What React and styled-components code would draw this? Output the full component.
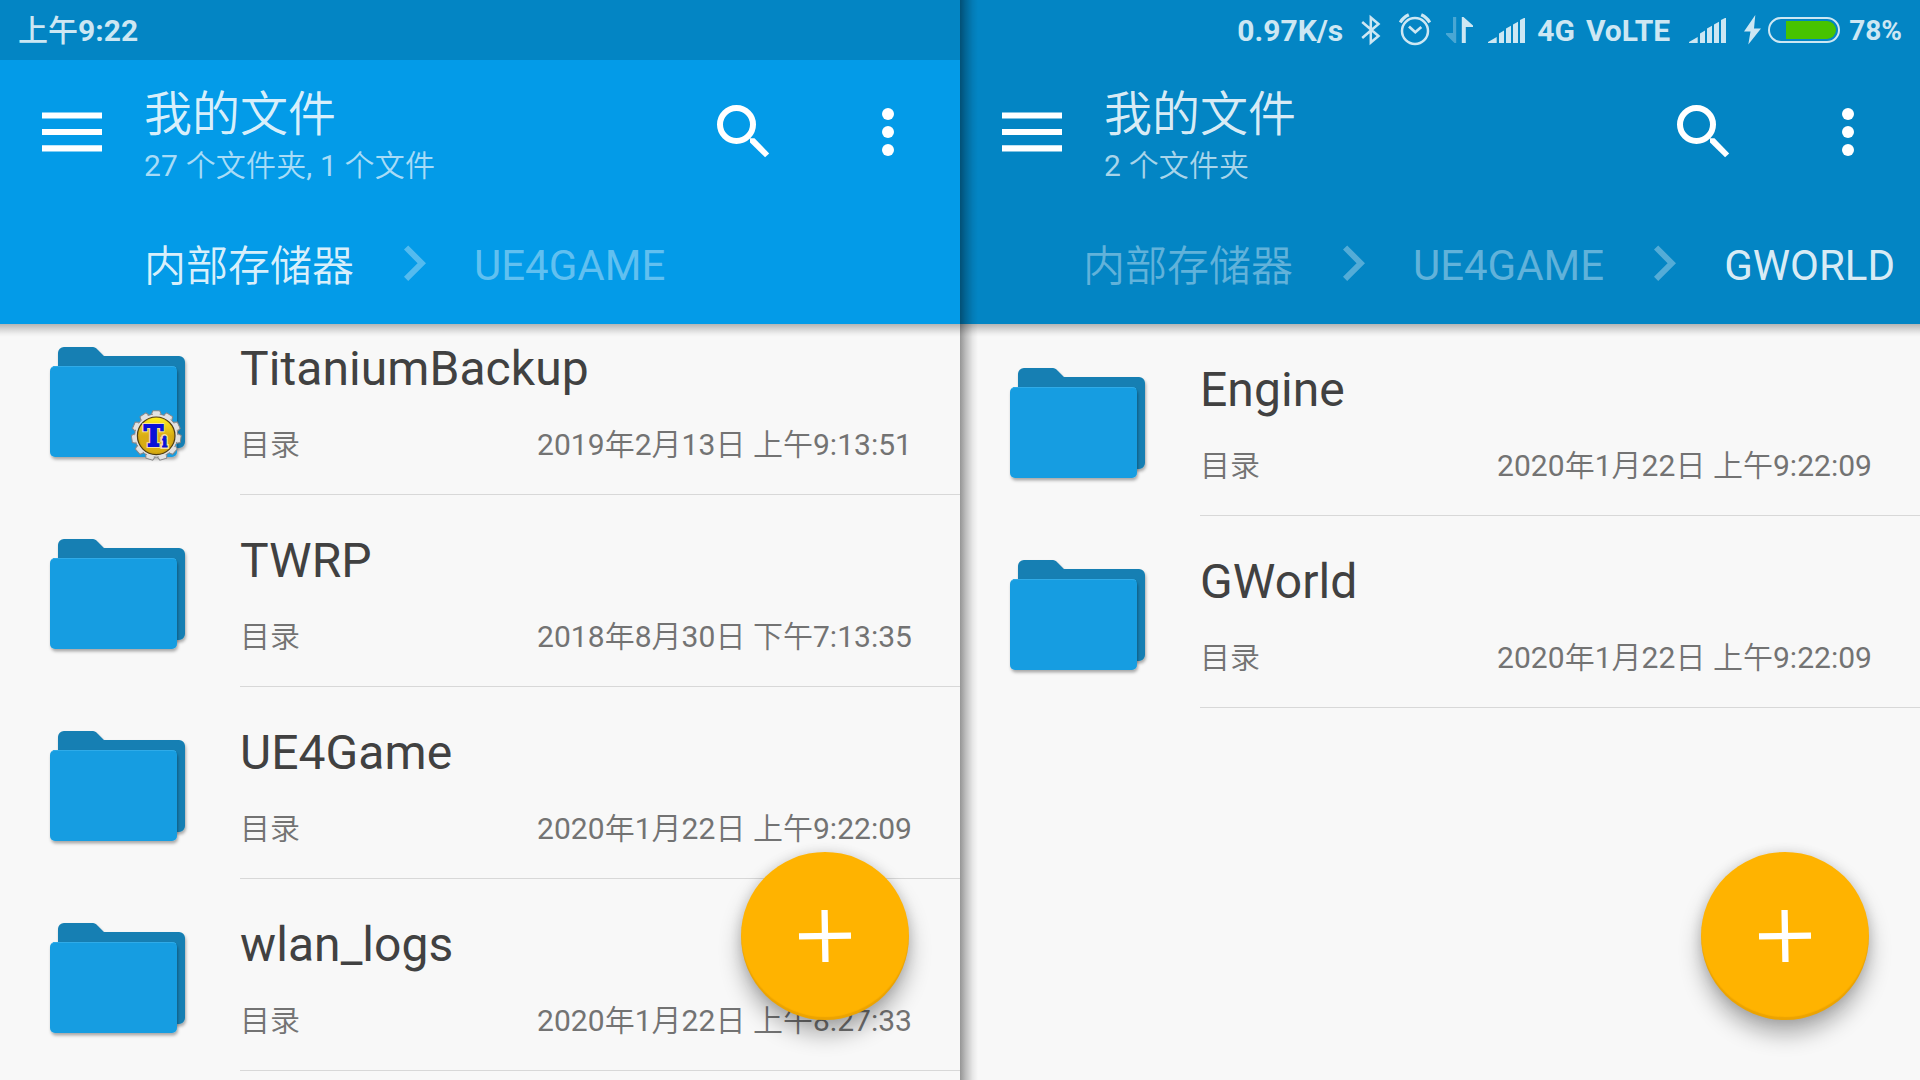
import React from "react";
import styled, { createGlobalStyle } from "styled-components";

const GlobalStyle = createGlobalStyle`
  * { box-sizing: border-box; }
  body { margin: 0; background: #f8f8f8; overflow: hidden; }
`;

const Screen = styled.div`
  position: relative;
  display: flex;
  flex-direction: column;
  width: 1920px;
  height: 1080px;
  overflow: hidden;
  background: #f8f8f8;
  font-family: Roboto, "Noto Sans CJK SC", sans-serif;
  white-space: nowrap;
`;

const StatusBar = styled.div`
  display: flex;
  justify-content: space-between;
  height: 60px;
  padding: 0 18px;
  background: #0385c4;
  color: #cde7f3;
`;

const StatusGroup = styled.div`
  display: flex;
  align-items: center;
  height: 60px;
`;

const StatusText = styled.span`
  font-size: ${(p) => p.$size || 30}px;
  font-weight: ${(p) => p.$weight || 700};
  line-height: 60px;
  padding-top: 1px;
  margin-left: ${(p) => p.$gap || 0}px;
`;

const StatusIcon = styled.svg`
  display: block;
  flex: none;
  height: 60px;
  width: ${(p) => p.$w}px;
  margin-left: ${(p) => p.$gap}px;
`;

const Panels = styled.div`
  display: grid;
  grid-template-columns: 960px 960px;
  height: 1020px;
`;

const Panel = styled.section`
  position: relative;
  display: flex;
  flex-direction: column;
  min-width: 0;
  overflow: hidden;
`;

const Header = styled.header`
  flex: none;
  position: relative;
  z-index: 1;
  height: 264px;
  background: ${(p) => (p.$active ? "#039be8" : "#0385c4")};
  &::after {
    content: "";
    position: absolute;
    left: 0;
    right: 0;
    top: 100%;
    height: 13px;
    background: linear-gradient(rgba(0, 0, 0, 0.27), rgba(0, 0, 0, 0.14) 40%, rgba(0, 0, 0, 0.04) 75%, transparent);
  }
`;

const Toolbar = styled.div`
  display: flex;
  align-items: flex-start;
  height: 176px;
  padding: 24px 48px 0 42px;
`;

const ToolIcon = styled.svg`
  display: block;
  flex: none;
  width: ${(p) => p.$w}px;
  height: 96px;
  margin-right: ${(p) => p.$after || 0}px;
`;

const Titles = styled.div`
  flex: 1;
`;

const Title = styled.div`
  padding-top: 1px;
  font-size: 48px;
  line-height: 60px;
  font-weight: 350;
  color: rgba(255, 255, 255, 0.87);
`;

const Subtitle = styled.div`
  font-size: 30px;
  line-height: 40px;
  margin-top: 1px;
  letter-spacing: 0.16px;
  color: rgba(255, 255, 255, 0.66);
`;

const Breadcrumbs = styled.nav`
  display: flex;
  align-items: center;
  justify-content: ${(p) => (p.$end ? "flex-end" : "flex-start")};
  height: 60px;
  padding: 0 25px 0 144px;
`;

const Crumb = styled.span`
  flex: none;
  font-size: 42px;
  line-height: 60px;
  padding-top: ${(p) => (p.$cjk ? 1 : 0)}px;
  font-weight: ${(p) => (p.$cjk ? 350 : 400)};
  color: rgba(255, 255, 255, ${(p) => (p.$current ? 0.87 : 0.38)});
`;

const Chevron = styled.svg`
  flex: none;
  display: block;
  width: 120px;
  height: 60px;
`;

const List = styled.div`
  margin-top: ${(p) => -p.$scrolled}px;
`;

const Row = styled.div`
  display: flex;
  height: 192px;
`;

const Thumb = styled.svg`
  flex: none;
  display: block;
  width: 240px;
  height: 192px;
`;

const RowBody = styled.div`
  flex: 1;
  padding: 38px 48px 0 0;
  border-bottom: 1px solid #d8d8d8;
`;

const Name = styled.div`
  font-size: 48px;
  line-height: 56px;
  letter-spacing: 0.07px;
  color: #414141;
`;

const Meta = styled.div`
  display: flex;
  justify-content: space-between;
  margin-top: 28px;
  font-size: 30px;
  line-height: 40px;
  letter-spacing: 0.03px;
  color: #737373;
`;

const Latin = styled.span`
  font-weight: 400;
`;

const Han = styled.span`
  font-weight: 350;
`;

const Fab = styled.button`
  position: absolute;
  right: 51px;
  bottom: 60px;
  z-index: 2;
  width: 168px;
  height: 168px;
  padding: 0;
  border: 0;
  border-radius: 50%;
  background: #ffb300;
  box-shadow: 0 14px 22px rgba(0, 0, 0, 0.3), 0 0 12px rgba(0, 0, 0, 0.13), inset 0 -3px 1px rgba(120, 70, 0, 0.14);
`;

const FabIcon = styled.svg`
  display: block;
  width: 168px;
  height: 168px;
`;

const Edge = styled.div`
  position: absolute;
  z-index: 3;
  left: 960px;
  top: 0;
  width: 18px;
  height: 1080px;
  background: linear-gradient(to right, rgba(0, 0, 0, 0.4), rgba(0, 0, 0, 0.23) 33%, rgba(0, 0, 0, 0.07) 70%, transparent);
`;

function Signal({ gap }) {
  return (
    <StatusIcon $w={37} $gap={gap} viewBox="0 0 37 60" fill="currentColor">
      <path d="M0 43v-1l8.7-5v6zM11 43V33.500l5-3V43zM18 43V28.500l5-2.700V43zM25 43V24.500l5-2.700V43zM32 43V20l4-2h1v25z" />
    </StatusIcon>
  );
}

function Status() {
  return (
    <StatusBar>
      <StatusGroup>
        <StatusText><StatusText $weight={500}>上午</StatusText>9:22</StatusText>
      </StatusGroup>
      <StatusGroup>
        <StatusText>0.97K/s</StatusText>
        <StatusIcon $w={20} $gap={18} viewBox="0 0 20 60" fill="none" stroke="currentColor" strokeWidth="2.5">
          <path d="M1.200 22L17.500 36 9.800 42.500V17.500L17.500 24 1.200 38" />
        </StatusIcon>
        <StatusIcon $w={32} $gap={18} viewBox="0 0 32 60" fill="none" stroke="currentColor" strokeWidth="2.500">
          <circle cx="16" cy="31" r="13" />
          <path d="M10 26.500l6.300 5.800 6-5.300" strokeWidth="2.700" />
          <path d="M1.200 22.500Q4 17.500 9.800 14.800M30.800 22.500Q28 17.500 22.200 14.800" strokeWidth="3.200" />
        </StatusIcon>
        <StatusIcon $w={27} $gap={15} viewBox="0 0 27 60" fill="currentColor">
          <path opacity=".35" d="M7 17h3.200v26H8.500L0 34.500V33h7z" />
          <path d="M15.800 17h1.700L27 25.500V27h-7.200v16h-4z" />
        </StatusIcon>
        <Signal gap={15} />
        <StatusText $gap={12}>4G</StatusText>
        <StatusText $gap={11}>VoLTE</StatusText>
        <Signal gap={19} />
        <StatusIcon $w={17} $gap={18} viewBox="0 0 17 60" fill="currentColor">
          <path d="M11.300 15L0 31.500h6.500L4.300 44.500 17 28.500h-7z" />
        </StatusIcon>
        <StatusIcon $w={72} $gap={7} viewBox="0 0 72 60">
          <rect x="1" y="18" width="70" height="24" rx="12" fill="none" stroke="currentColor" strokeWidth="2" />
          <path d="M18 21h41a9 9 0 0 1 0 18H18z" fill="#47c300" />
        </StatusIcon>
        <StatusText $gap={9} $size={28}>78%</StatusText>
      </StatusGroup>
    </StatusBar>
  );
}

function Folder({ badge }) {
  const teeth = Array.from({ length: 11 }, (_, i) => (i * 360) / 11);
  return (
    <Thumb viewBox="0 0 240 192">
      <defs>
        <filter id="cast" x="-10%" y="-10%" width="120%" height="125%">
          <feDropShadow dx="1" dy="2.500" stdDeviation="1.800" floodOpacity=".32" />
        </filter>
        <radialGradient id="gold" cx=".5" cy=".5" r=".6">
          <stop offset="0" stopColor="#dca71b" />
          <stop offset=".7" stopColor="#d9ae12" />
          <stop offset="1" stopColor="#b58a10" />
        </radialGradient>
        <linearGradient id="shine" x1="0" y1="0" x2="0" y2="1">
          <stop offset="0" stopColor="#fff020" />
          <stop offset=".5" stopColor="#fff020" stopOpacity="0" />
        </linearGradient>
      </defs>
      <path filter="url(#cast)" fill="#147fb3" d="M58 50a6 6 0 0 1 6-6H93q2 0 3.500 1.500L104 53H179a6 6 0 0 1 6 6V139a6 6 0 0 1-6 6H58z" />
      <rect filter="url(#cast)" x="50" y="63" width="127" height="91" rx="5" fill="#169de1" />
      <path d="M52 65q1-1.500 3-1.500H172q3 0 4 1.500" fill="none" stroke="#2fabe8" />
      {badge && (
        <g>
          <g fill="#dedede" stroke="#858585" strokeWidth="1">
            {teeth.map((a) => (
              <path key={a} transform={`rotate(${a} 156.300 132.500)`} d="M151 112.500l1.800-4.700h7l1.800 4.700z" />
            ))}
            <circle cx="156.300" cy="132.500" r="21.400" />
          </g>
          <g fill="#e2e2e2">
            {teeth.map((a) => (
              <path key={a} transform={`rotate(${a} 156.300 132.500)`} d="M152.200 114l1.400-5.200h5.400l1.400 5.200z" />
            ))}
            <circle cx="156.300" cy="132.500" r="21" />
          </g>
          <circle cx="156.200" cy="132.800" r="18.800" fill="url(#gold)" stroke="#4d3c12" strokeWidth="1.200" />
          <circle cx="156.200" cy="132.800" r="18" fill="url(#shine)" />
          <g fontFamily="'DejaVu Serif', serif" fontWeight="700" strokeLinejoin="miter">
            <g stroke="#f5dfa0" strokeWidth="4" fill="#f5dfa0">
              <text x="144" y="143" fontSize="27" textLength="19" lengthAdjust="spacingAndGlyphs">T</text>
              <text x="162" y="143.500" fontSize="14">i</text>
            </g>
            <g stroke="#0a10d8" strokeWidth="2" fill="#0a10d8">
              <text x="144" y="143" fontSize="27" textLength="19" lengthAdjust="spacingAndGlyphs">T</text>
              <text x="162" y="143.500" fontSize="14" strokeWidth="1">i</text>
            </g>
          </g>
        </g>
      )}
    </Thumb>
  );
}

function Separator() {
  return (
    <Chevron viewBox="0 0 120 60" fill="#fff" fillOpacity=".32">
      <path d="M54.200 9.500L72 27.200 54.200 45 50 40.800 63.600 27.200 50 13.600z" />
    </Chevron>
  );
}

const hasHan = (s) => /[\u4e00-\u9fff]/.test(s);

function Mixed({ text }) {
  return text.split(/([\u4e00-\u9fff]+)/).map((s, i) => (hasHan(s) ? <Han key={i}>{s}</Han> : <Latin key={i}>{s}</Latin>));
}

function FilePanel({ active, subtitle, crumbs, current, alignEnd, rows, scrolled = 0 }) {
  return (
    <Panel>
      <Header $active={active}>
        <Toolbar>
          <ToolIcon $w={60} $after={42} viewBox="0 0 60 96" fill="#fff">
            <path d="M0 28.400h60v6.200H0zM0 45h60v6H0zM0 61.300h60v6.300H0z" />
          </ToolIcon>
          <Titles>
            <Title>我的文件</Title>
            <Subtitle><Mixed text={subtitle} /></Subtitle>
          </Titles>
          <ToolIcon $w={54} $after={112} viewBox="0 0 54 96" fill="none" stroke="#fff">
            <circle cx="20.500" cy="40.500" r="16.500" strokeWidth="6" />
            <path stroke="none" fill="#fff" d="M34 54.300h4.500L53.200 69.500l-4.100 3.700L34 58.500z" />
          </ToolIcon>
          <ToolIcon $w={12} $after={18} viewBox="0 0 12 96" fill="#fff">
            <circle cx="6" cy="30" r="6" />
            <circle cx="6" cy="48" r="6" />
            <circle cx="6" cy="66" r="6" />
          </ToolIcon>
        </Toolbar>
        <Breadcrumbs $end={alignEnd}>
          {crumbs.map((c, i) => (
            <React.Fragment key={c}>
              {i > 0 && <Separator />}
              <Crumb $cjk={hasHan(c)} $current={i === current}>{c}</Crumb>
            </React.Fragment>
          ))}
        </Breadcrumbs>
      </Header>
      <List $scrolled={scrolled}>
        {rows.map((r) => (
          <Row key={r.name}>
            <Folder badge={r.badge} />
            <RowBody>
              <Name>{r.name}</Name>
              <Meta>
                <span><Mixed text="目录" /></span>
                <span><Mixed text={r.date} /></span>
              </Meta>
            </RowBody>
          </Row>
        ))}
      </List>
      <Fab aria-label="新建">
        <FabIcon viewBox="0 0 168 168">
          <path transform="rotate(-1 84 84)" d="M84 58v52M58 84h52" stroke="#fff" strokeWidth="6.300" />
        </FabIcon>
      </Fab>
    </Panel>
  );
}

const leftRows = [
  { name: "TitaniumBackup", date: "2019年2月13日 上午9:13:51", badge: true },
  { name: "TWRP", date: "2018年8月30日 下午7:13:35" },
  { name: "UE4Game", date: "2020年1月22日 上午9:22:09" },
  { name: "wlan_logs", date: "2020年1月22日 上午8:27:33" },
];

const rightRows = [
  { name: "Engine", date: "2020年1月22日 上午9:22:09" },
  { name: "GWorld", date: "2020年1月22日 上午9:22:09" },
];

export default function App() {
  return (
    <>
      <GlobalStyle />
      <Screen>
        <Status />
        <Panels>
          <FilePanel active subtitle="27 个文件夹, 1 个文件" crumbs={["内部存储器", "UE4GAME"]} current={0} rows={leftRows} scrolled={21} />
          <FilePanel subtitle="2 个文件夹" crumbs={["内部存储器", "UE4GAME", "GWORLD"]} current={2} alignEnd rows={rightRows} />
        </Panels>
        <Edge />
      </Screen>
    </>
  );
}
